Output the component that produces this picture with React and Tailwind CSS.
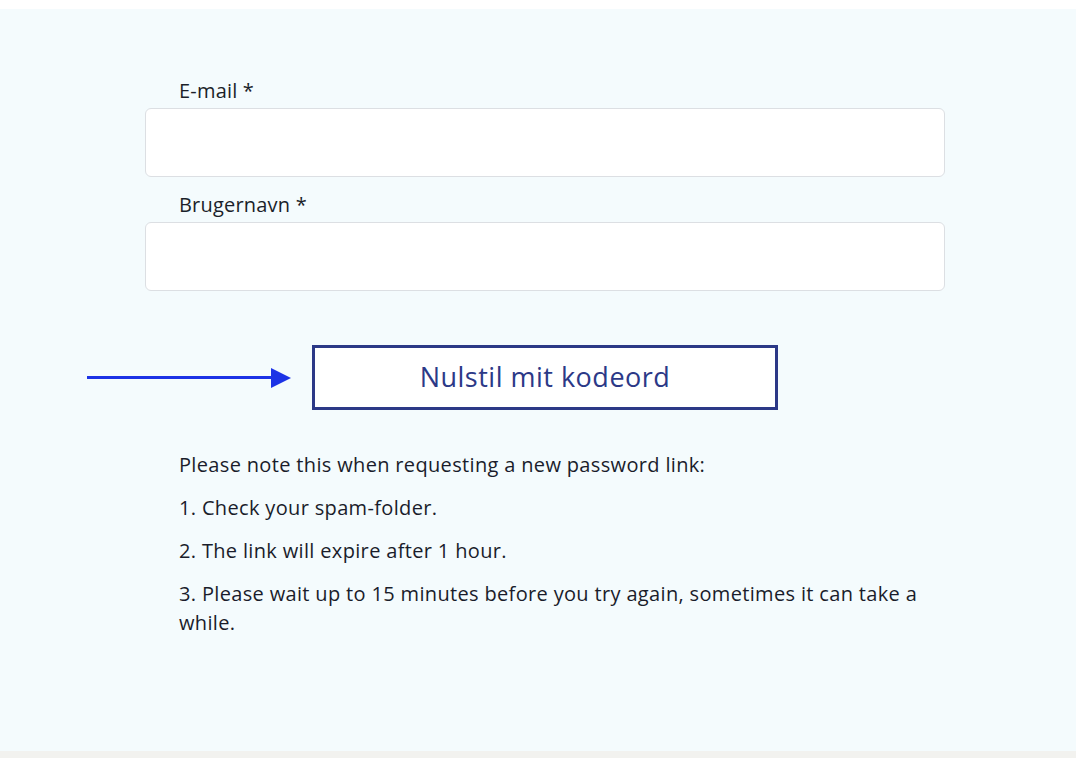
import React from "react";

const notes = [
  "1. Check your spam-folder.",
  "2. The link will expire after 1 hour.",
  "3. Please wait up to 15 minutes before you try again, sometimes it can take a while.",
];

function Field({ label }) {
  return (
    <div>
      <label className="block pl-[34px] text-[20px] leading-[26px] tracking-[0.2px] font-medium text-[#1b1f2a] mb-[4px]">{label}</label>
      <input type="text" className="block w-[800px] h-[69px] bg-white border border-[#dcdfe3] rounded-[6px] outline-none" />
    </div>
  );
}

export default function App() {
  return (
    <div className="min-h-[758px] bg-white font-['Open_Sans',sans-serif]">
      <div className="h-[9px] bg-white" />
      <div className="bg-[#f4fbfd] h-[742px] pt-[69px]">
        <div className="ml-[145px] flex flex-col gap-[15px]">
          <Field label="E-mail *" />
          <Field label="Brugernavn *" />
        </div>

        <div className="flex items-center mt-[54px]">
          <div className="ml-[87px] flex items-center w-[204px]">
            <div className="h-[3px] flex-1 bg-[#1c33e6]" />
            <svg width="20" height="20" viewBox="0 0 20 20" className="block">
              <polygon points="0,0 20,10 0,20" fill="#1c33e6" />
            </svg>
          </div>
          <button className="ml-[21px] w-[466px] h-[65px] bg-white border-[3px] border-[#2c3987] text-[#2c3987] text-[27px] tracking-[0.5px]">
            Nulstil mit kodeord
          </button>
        </div>

        <div className="ml-[179px] mt-[40px] w-[745px] text-[20px] leading-[29px] tracking-[0.34px] text-[#1a1d2b] flex flex-col gap-[14px]">
          <p>Please note this when requesting a new password link:</p>
          {notes.map((n, i) => (
            <p key={i}>{n}</p>
          ))}
        </div>
      </div>
      <div className="h-[7px] bg-[#f2f2ef]" />
    </div>
  );
}
